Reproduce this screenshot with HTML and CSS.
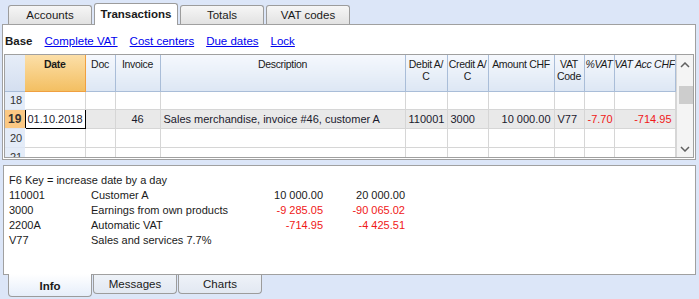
FILE: index.html
```html
<!DOCTYPE html>
<html lang="en">
<head>
    <meta charset="UTF-8">
    <title>Transactions</title>
    <link rel="stylesheet" href="styles.css">
</head>
<body>

    <!-- Top tabs -->
    <div class="tabs top-tabs">
        <div class="tab">Accounts</div>
        <div class="tab active">Transactions</div>
        <div class="tab">Totals</div>
        <div class="tab">VAT codes</div>
    </div>

    <div class="panel main-panel">
        <div class="views">
            <b>Base</b>
            <a href="#">Complete VAT</a>
            <a href="#">Cost centers</a>
            <a href="#">Due dates</a>
            <a href="#">Lock</a>
        </div>

        <div class="grid">
            <table class="table">
                <colgroup>
                    <col class="c-row"><col class="c-date"><col class="c-doc"><col class="c-inv">
                    <col class="c-desc"><col class="c-acc"><col class="c-acc2"><col class="c-amt">
                    <col class="c-code"><col class="c-pct"><col class="c-vat">
                </colgroup>
                <thead>
                    <tr>
                        <th class="rowhead"></th>
                        <th class="sel">Date</th>
                        <th>Doc</th>
                        <th>Invoice</th>
                        <th>Description</th>
                        <th>Debit A/<br>C</th>
                        <th>Credit A/<br>C</th>
                        <th>Amount CHF</th>
                        <th>VAT<br>Code</th>
                        <th class="it">%VAT</th>
                        <th class="it">VAT Acc CHF</th>
                    </tr>
                </thead>
                <tbody>
                    <tr class="r-short">
                        <td class="rowhead">18</td><td></td><td></td><td></td><td></td><td></td><td></td><td></td><td></td><td></td><td></td>
                    </tr>
                    <tr class="current">
                        <td class="rowhead">19</td>
                        <td class="edit">01.10.2018</td>
                        <td></td>
                        <td class="center">46</td>
                        <td>Sales merchandise, invoice #46, customer A</td>
                        <td>110001</td>
                        <td>3000</td>
                        <td class="num">10 000.00</td>
                        <td>V77</td>
                        <td class="num neg">-7.70</td>
                        <td class="num neg">-714.95</td>
                    </tr>
                    <tr>
                        <td class="rowhead">20</td><td></td><td></td><td></td><td></td><td></td><td></td><td></td><td></td><td></td><td></td>
                    </tr>
                    <tr>
                        <td class="rowhead">21</td><td></td><td></td><td></td><td></td><td></td><td></td><td></td><td></td><td></td><td></td>
                    </tr>
                </tbody>
            </table>
            <div class="scrollbar">
                <svg class="arrow" width="10" height="6" viewBox="0 0 10 6"><path d="M1 5 L5 1 L9 5" fill="none" stroke="#606060" stroke-width="1.5"/></svg>
                <div class="track"><div class="thumb"></div></div>
                <svg class="arrow" width="10" height="6" viewBox="0 0 10 6"><path d="M1 1 L5 5 L9 1" fill="none" stroke="#606060" stroke-width="1.5"/></svg>
            </div>
        </div>
    </div>

    <!-- Info panel -->
    <div class="panel info-panel">
        <div class="info-line">F6 Key = increase date by a day</div>
        <div class="info-row"><span class="i-acc">110001</span><span class="i-desc">Customer A</span><span class="i-amt">10 000.00</span><span class="i-amt">20 000.00</span></div>
        <div class="info-row"><span class="i-acc">3000</span><span class="i-desc">Earnings from own products</span><span class="i-amt neg">-9 285.05</span><span class="i-amt neg">-90 065.02</span></div>
        <div class="info-row"><span class="i-acc">2200A</span><span class="i-desc">Automatic VAT</span><span class="i-amt neg">-714.95</span><span class="i-amt neg">-4 425.51</span></div>
        <div class="info-row"><span class="i-acc">V77</span><span class="i-desc">Sales and services 7.7%</span></div>
    </div>

    <div class="tabs bottom-tabs">
        <div class="tab active">Info</div>
        <div class="tab">Messages</div>
        <div class="tab">Charts</div>
    </div>

</body>
</html>
```

FILE: styles.css
```css
* {
    box-sizing: border-box;
}
body {
    margin: 0;
    padding: 0;
    background-color: #dce6f8;
    font-family: "Liberation Sans", Arial, sans-serif;
    font-size: 11px;
    color: #1a1a1a;
    width: 699px;
    height: 299px;
    overflow: hidden;
}

/* tabs */
.tabs {
    display: flex;
    gap: 2px;
    padding-left: 8px;
}
.top-tabs {
    height: 24px;
    align-items: flex-end;
}
.tab {
    width: 84px;
    height: 19px;
    border: 1px solid #9c9c9c;
    text-align: center;
    line-height: 18px;
    font-size: 11.5px;
    color: #1a1a1a;
}
.top-tabs .tab {
    border-bottom: none;
    border-radius: 3px 3px 0 0;
    background: linear-gradient(#f6f6f6, #e2e2e2);
}
.top-tabs .tab.active {
    height: 22px;
    margin-bottom: -1px;
    background: #fff;
    font-weight: bold;
    position: relative;
    z-index: 1;
    line-height: 20px;
}
.bottom-tabs {
    align-items: flex-start;
    gap: 1px;
}
.bottom-tabs .tab {
    border-top: none;
    border-radius: 0 0 4px 4px;
    background: linear-gradient(#eef2f8, #e2e8f2);
    height: 19px;
}
.bottom-tabs .tab.active {
    height: 23px;
    margin-top: -1px;
    background: linear-gradient(#ffffff, #e6eefa);
    font-weight: bold;
    line-height: 25px;
    position: relative;
    z-index: 1;
}

/* panels */
.panel {
    margin-left: 2px;
    width: 694px;
    background: #fff;
    border: 1px solid #a0a0a0;
}
.main-panel {
    height: 136px;
    padding: 0 1px 1px 1px;
}
.views {
    height: 29px;
    padding: 10px 0 0 1px;
    display: flex;
    gap: 12px;
    font-size: 11.5px;
}
.views a {
    color: #0000ee;
}

/* grid */
.grid {
    display: flex;
    border: 1px solid #a0a0a0;
    height: 104px;
    overflow: hidden;
}
.table {
    border-collapse: collapse;
    table-layout: fixed;
    width: 670px;
}
.c-row { width: 20px; }
.c-date { width: 60px; }
.c-doc { width: 30px; }
.c-inv { width: 45px; }
.c-desc { width: 245px; }
.c-acc { width: 42px; }
.c-acc2 { width: 41px; }
.c-amt { width: 66px; }
.c-code { width: 30px; }
.c-pct { width: 30px; }
.c-vat { width: 61px; }
th {
    height: 36px;
    vertical-align: top;
    font-weight: normal;
    font-size: 10.5px;
    line-height: 12px;
    padding: 3px 0 0;
    background: linear-gradient(#f5f8fd, #dde7f4);
    border-right: 1px solid #a9bdd8;
    border-bottom: 1px solid #a9bdd8;
    white-space: nowrap;
    overflow: hidden;
    letter-spacing: -0.3px;
}
th.sel {
    background: linear-gradient(#fcdfa8, #f3bf62);
    border-right: 1px solid #f0a040;
    border-bottom: 1px solid #f0a040;
    font-weight: bold;
}
th.it {
    font-style: italic;
}
th.rowhead {
    background: linear-gradient(#e6edf8, #d4dff0);
    border-right: none;
}
td {
    height: 19px;
    padding: 0 3px;
    border-right: 1px solid #d6d6d6;
    border-bottom: 1px solid #d6d6d6;
    white-space: nowrap;
    overflow: hidden;
    color: #1a1a2e;
}
.r-short td {
    height: 18px;
}
td.rowhead {
    background: #e4ecf8;
    padding-left: 5px;
    border-right: none;
    border-bottom: 1px solid #dde5f2;
    color: #333;
}
.current td {
    background: #e9e9e9;
}
.current td.rowhead {
    background: #fbc984;
    font-weight: bold;
    font-size: 12px;
    padding-left: 3px;
}
.current td.edit {
    background: #fff;
    border: 1px solid #000;
    padding-left: 2px;
    font-size: 11px;
}
.center {
    text-align: center;
}
.num {
    text-align: right;
}
.neg {
    color: #f01818;
}

/* scrollbar */
.scrollbar {
    width: 19px;
    border-left: 1px solid #d6d6d6;
    background: #f4f4f4;
    display: flex;
    flex-direction: column;
    align-items: center;
    padding: 7px 0 5px;
}
.track {
    flex: 1;
    width: 100%;
}
.thumb {
    margin: 18px 0 0 2px;
    width: 15px;
    height: 18px;
    background: #cdcdcd;
}

/* info panel */
.info-panel {
    margin-top: 5px;
    margin-left: 3px;
    width: 693px;
    height: 110px;
    padding: 7px 0 0 5px;
    line-height: 15px;
    font-size: 11px;
}
.info-row {
    display: flex;
}
.i-acc {
    width: 82px;
}
.i-desc {
    width: 150px;
}
.i-amt {
    width: 82px;
    text-align: right;
}
```
